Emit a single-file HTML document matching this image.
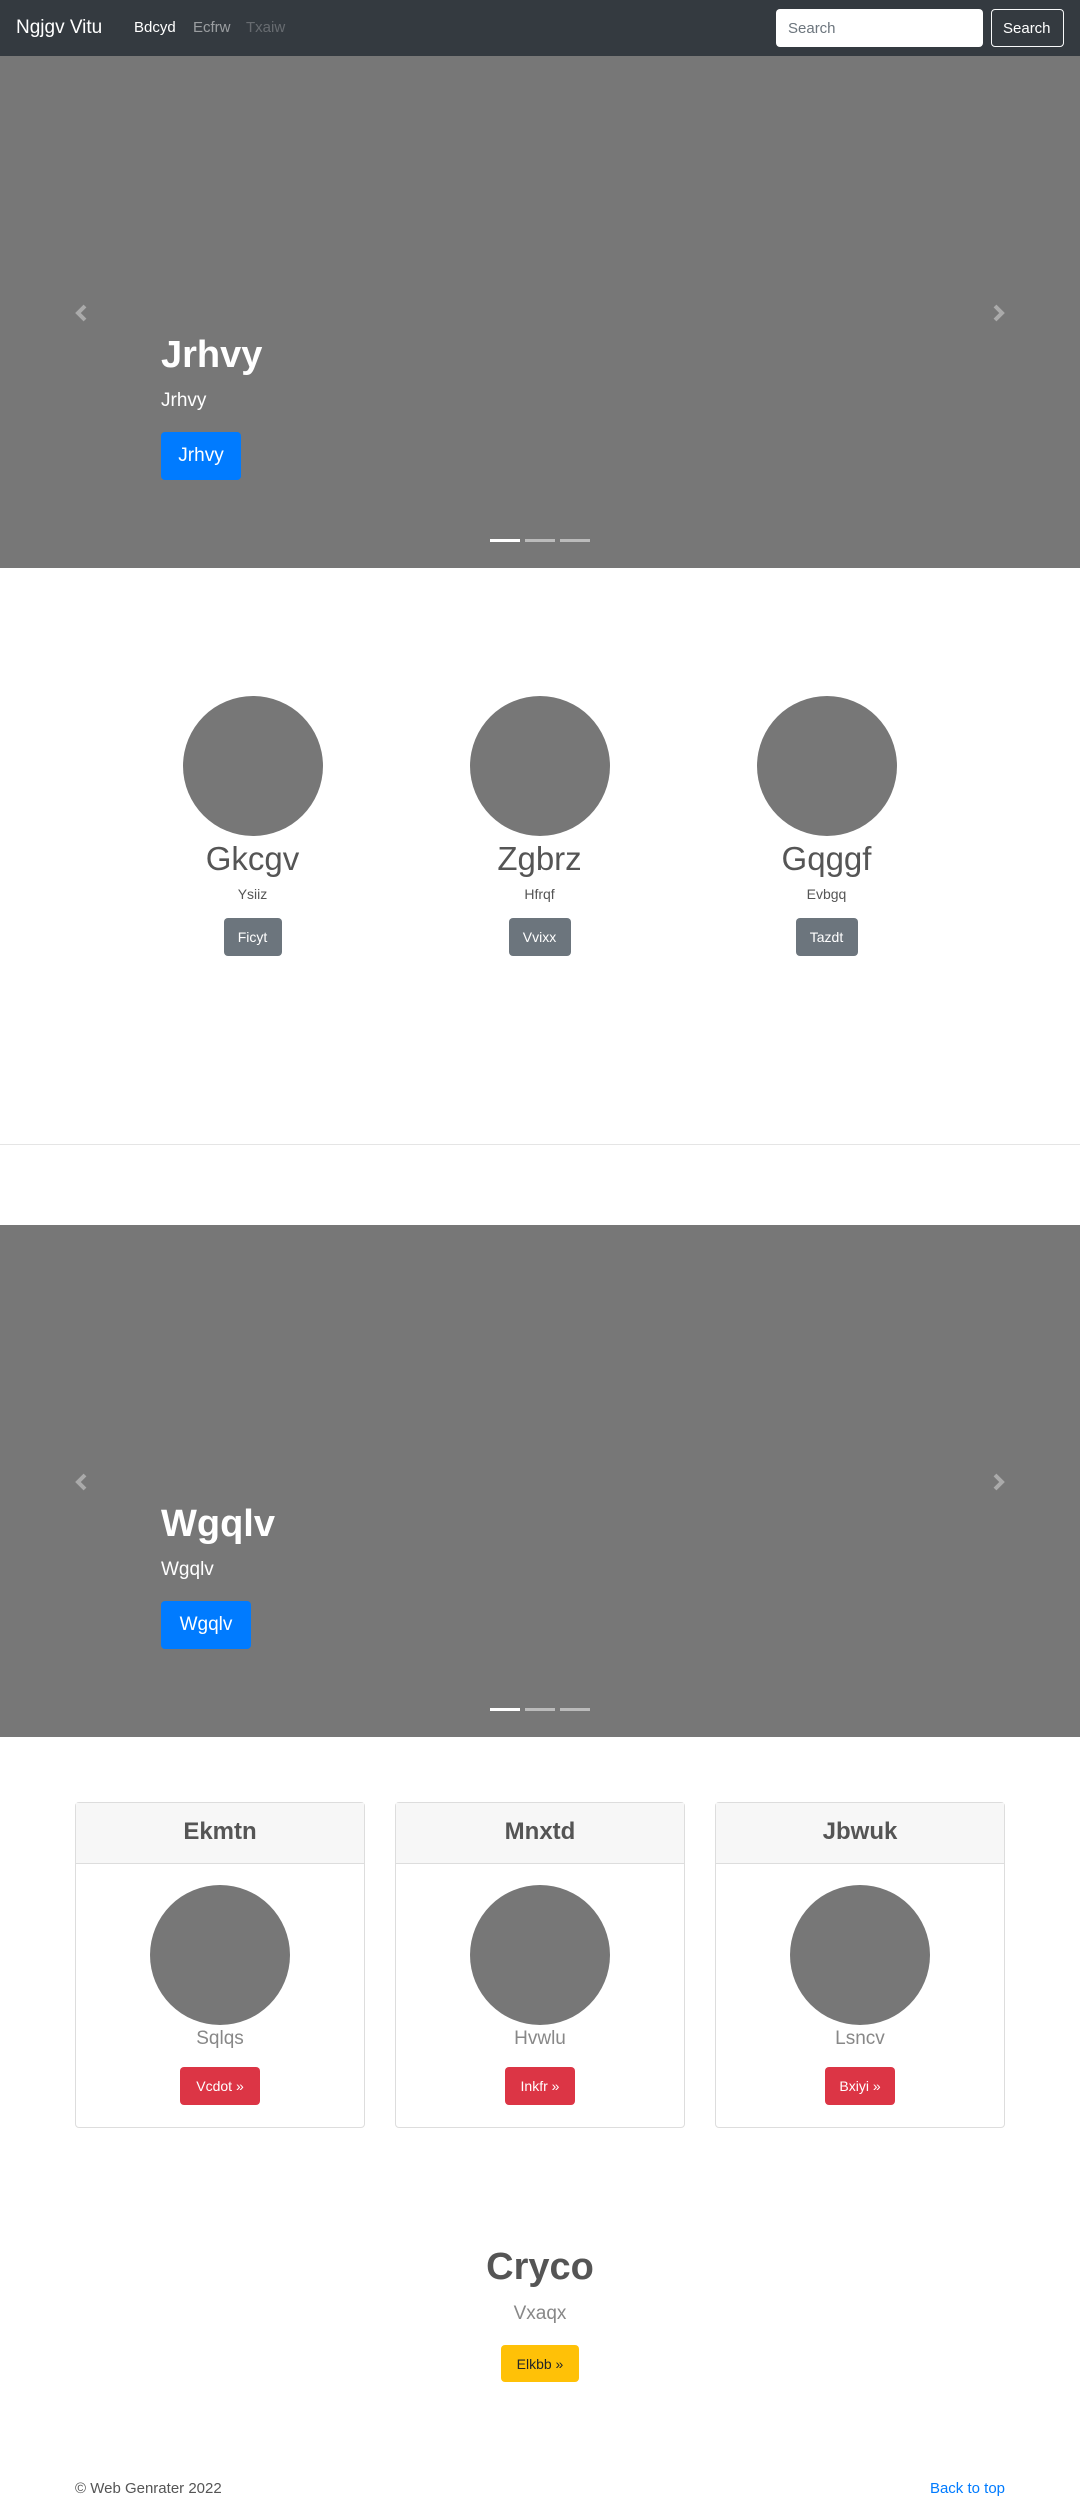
<!DOCTYPE html>
<html><head><style>
*{box-sizing:border-box;margin:0;padding:0}
body{width:1080px;height:2501px;font-family:"Liberation Sans",sans-serif;background:#fff;color:#555;position:relative;overflow:hidden}
.abs{position:absolute}
.nav{left:0;top:0;width:1080px;height:56px;background:#343a40}
.car{left:0;width:1080px;height:512px;background:#777}
.c{text-align:center}
.circ{width:140px;height:140px;border-radius:50%;background:#777}
.btn{border-radius:4px;color:#fff;font-size:14px;display:flex;align-items:center;justify-content:center}
</style></head><body>
<div class="abs nav">
<div class="abs" style="left:16px;top:17px;color:#fff;font-size:19px">Ngjgv Vitu</div>
<div class="abs" style="left:134px;top:19px;color:#fff;font-size:15px">Bdcyd</div>
<div class="abs" style="left:193px;top:19px;color:rgba(255,255,255,.5);font-size:15px">Ecfrw</div>
<div class="abs" style="left:246px;top:19px;color:rgba(255,255,255,.25);font-size:15px">Txaiw</div>
<div class="abs" style="left:776px;top:9px;width:207px;height:38px;background:#fff;border-radius:4px;color:#6c757d;font-size:15px;padding:11px 12px">Search</div>
<div class="abs" style="left:991px;top:9px;width:73px;height:38px;border:1px solid #f8f9fa;border-radius:4px;color:#fff;font-size:15px;padding:10px 11px">Search</div>
</div>

<div class="abs car" style="top:56px">
<svg class="abs" style="left:73px;top:246px" width="16" height="22" viewBox="0 0 16 22"><path d="M12 4 L5 11 L12 18" stroke="#aaa" stroke-width="4" fill="none"/></svg>
<svg class="abs" style="left:991px;top:246px" width="16" height="22" viewBox="0 0 16 22"><path d="M4 4 L11 11 L4 18" stroke="#aaa" stroke-width="4" fill="none"/></svg>
<div class="abs" style="left:161px;top:278px;color:#fff;font-size:38px;font-weight:bold">Jrhvy</div>
<div class="abs" style="left:161px;top:334px;color:#fff;font-size:19px">Jrhvy</div>
<div class="abs btn" style="left:161px;top:376px;width:80px;height:48px;background:#007bff;font-size:19px">Jrhvy</div>
<div class="abs" style="left:490px;top:483px;width:30px;height:3px;background:#fff"></div>
<div class="abs" style="left:525px;top:483px;width:30px;height:3px;background:rgba(255,255,255,.5)"></div>
<div class="abs" style="left:560px;top:483px;width:30px;height:3px;background:rgba(255,255,255,.5)"></div>
</div>

<div class="abs c" style="left:109px;top:696px;width:287px"><div class="circ" style="margin:0 auto"></div><div style="font-size:33px;margin-top:4px">Gkcgv</div><div style="font-size:14px;margin-top:8px">Ysiiz</div><div class="btn" style="width:58px;height:38px;background:#6c757d;margin:16px auto 0">Ficyt</div></div>
<div class="abs c" style="left:396px;top:696px;width:287px"><div class="circ" style="margin:0 auto"></div><div style="font-size:33px;margin-top:4px">Zgbrz</div><div style="font-size:14px;margin-top:8px">Hfrqf</div><div class="btn" style="width:62px;height:38px;background:#6c757d;margin:16px auto 0">Vvixx</div></div>
<div class="abs c" style="left:683px;top:696px;width:287px"><div class="circ" style="margin:0 auto"></div><div style="font-size:33px;margin-top:4px">Gqggf</div><div style="font-size:14px;margin-top:8px">Evbgq</div><div class="btn" style="width:62px;height:38px;background:#6c757d;margin:16px auto 0">Tazdt</div></div>

<div class="abs" style="left:0;top:1144px;width:1080px;height:1px;background:#e5e5e5"></div>

<div class="abs car" style="top:1225px">
<svg class="abs" style="left:73px;top:246px" width="16" height="22" viewBox="0 0 16 22"><path d="M12 4 L5 11 L12 18" stroke="#aaa" stroke-width="4" fill="none"/></svg>
<svg class="abs" style="left:991px;top:246px" width="16" height="22" viewBox="0 0 16 22"><path d="M4 4 L11 11 L4 18" stroke="#aaa" stroke-width="4" fill="none"/></svg>
<div class="abs" style="left:161px;top:278px;color:#fff;font-size:38px;font-weight:bold">Wgqlv</div>
<div class="abs" style="left:161px;top:334px;color:#fff;font-size:19px">Wgqlv</div>
<div class="abs btn" style="left:161px;top:376px;width:90px;height:48px;background:#007bff;font-size:19px">Wgqlv</div>
<div class="abs" style="left:490px;top:483px;width:30px;height:3px;background:#fff"></div>
<div class="abs" style="left:525px;top:483px;width:30px;height:3px;background:rgba(255,255,255,.5)"></div>
<div class="abs" style="left:560px;top:483px;width:30px;height:3px;background:rgba(255,255,255,.5)"></div>
</div>

<div class="abs c" style="left:75px;top:1802px;width:290px;height:326px;border:1px solid #ddd;border-radius:4px">
<div style="height:61px;background:#f7f7f7;border-bottom:1px solid #ddd;font-size:24px;font-weight:bold;padding-top:15px">Ekmtn</div>
<div class="circ" style="margin:21px auto 0"></div><div style="font-size:19px;color:#888;margin-top:3px">Sqlqs</div><div class="btn" style="width:80px;height:38px;background:#dc3545;margin:17px auto 0">Vcdot »</div></div>
<div class="abs c" style="left:395px;top:1802px;width:290px;height:326px;border:1px solid #ddd;border-radius:4px">
<div style="height:61px;background:#f7f7f7;border-bottom:1px solid #ddd;font-size:24px;font-weight:bold;padding-top:15px">Mnxtd</div>
<div class="circ" style="margin:21px auto 0"></div><div style="font-size:19px;color:#888;margin-top:3px">Hvwlu</div><div class="btn" style="width:70px;height:38px;background:#dc3545;margin:17px auto 0">Inkfr »</div></div>
<div class="abs c" style="left:715px;top:1802px;width:290px;height:326px;border:1px solid #ddd;border-radius:4px">
<div style="height:61px;background:#f7f7f7;border-bottom:1px solid #ddd;font-size:24px;font-weight:bold;padding-top:15px">Jbwuk</div>
<div class="circ" style="margin:21px auto 0"></div><div style="font-size:19px;color:#888;margin-top:3px">Lsncv</div><div class="btn" style="width:70px;height:38px;background:#dc3545;margin:17px auto 0">Bxiyi »</div></div>

<div class="abs c" style="left:0;top:2246px;width:1080px">
<div style="font-size:38px;font-weight:bold">Cryco</div>
<div style="font-size:19px;color:#888;margin-top:14px">Vxaqx</div>
<div class="btn" style="width:78px;height:37px;background:#ffc107;color:#212529;margin:20px auto 0">Elkbb »</div>
</div>

<div class="abs" style="left:75px;top:2480px;font-size:15px">© Web Genrater 2022</div>
<div class="abs" style="left:925px;top:2480px;font-size:15px;color:#007bff;width:80px;text-align:right">Back to top</div>
</body></html>
